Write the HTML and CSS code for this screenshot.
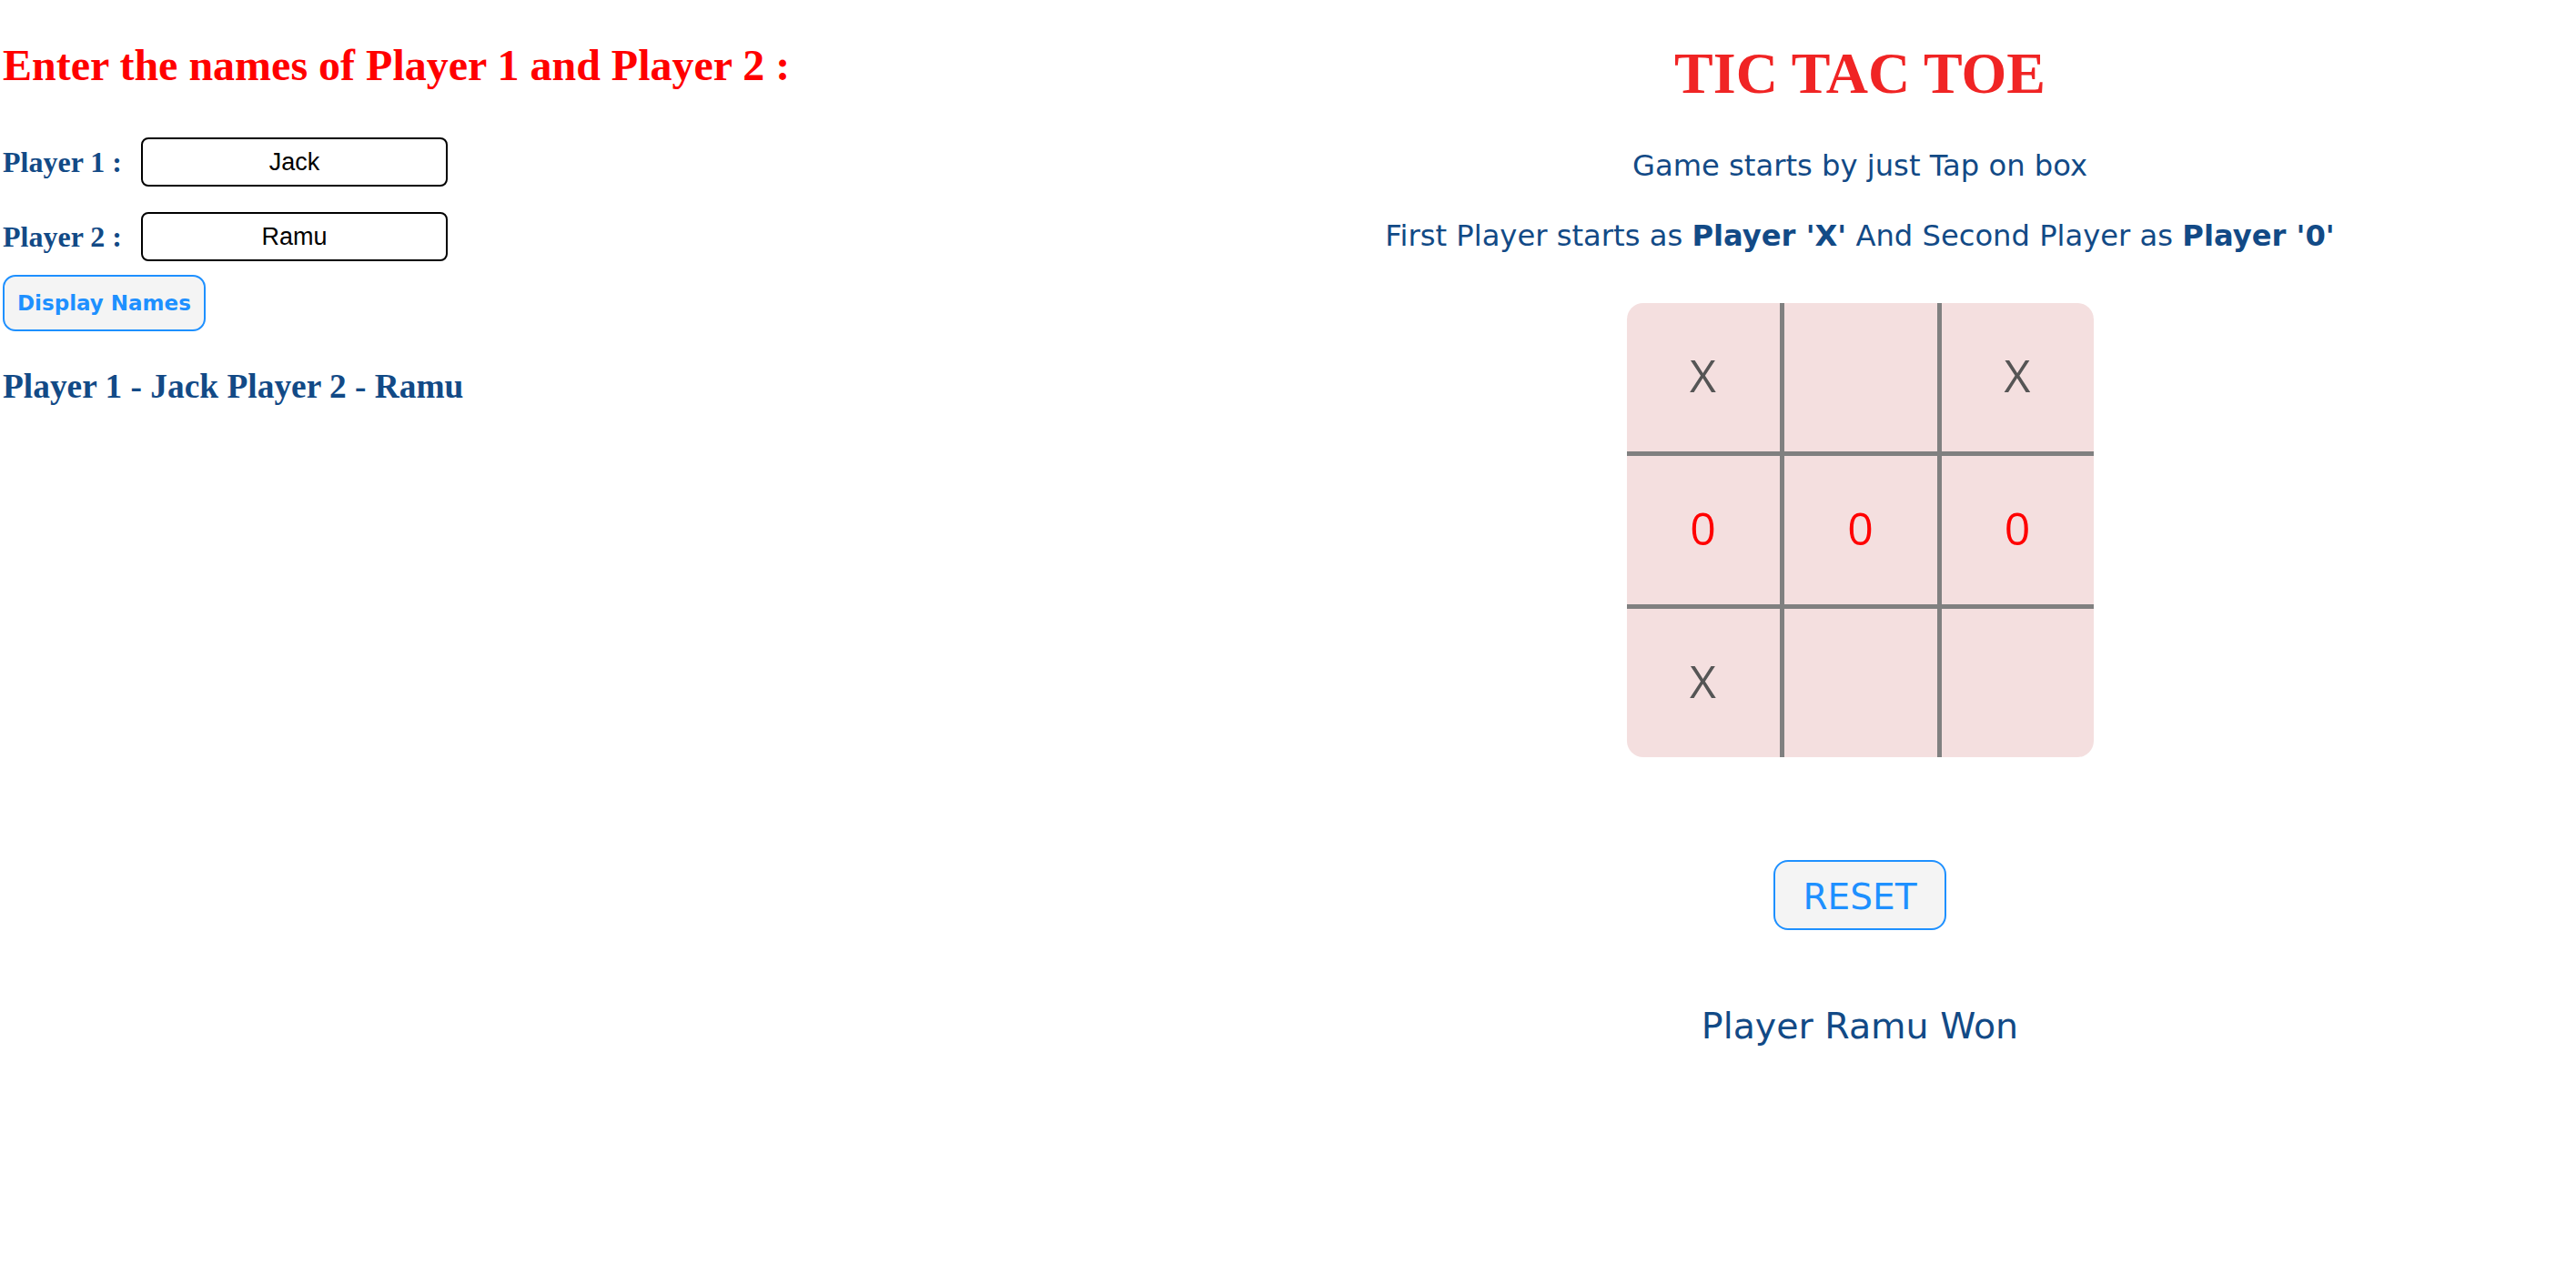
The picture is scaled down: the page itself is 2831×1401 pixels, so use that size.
FILE: index.html
```html
<!DOCTYPE html>
<html lang="en">
<head>
<meta charset="utf-8">
<title>Tic Tac Toe</title>
<link rel="stylesheet" href="styles.css">
</head>
<body>
<div class="page">
  <section class="players">
    <h1 class="prompt">Enter the names of Player 1 and Player 2 :</h1>
    <div class="field field-first">
      <label class="field-label" for="p1">Player 1 :</label>
      <input class="field-input" id="p1" type="text" value="Jack">
    </div>
    <div class="field">
      <label class="field-label" for="p2">Player 2 :</label>
      <input class="field-input" id="p2" type="text" value="Ramu">
    </div>
    <button class="display-btn" type="button">Display Names</button>
    <h2 class="names">Player 1 - Jack Player 2 - Ramu</h2>
  </section>

  <main class="game">
    <h1 class="title">TIC TAC TOE</h1>
    <p class="info info-first">Game starts by just Tap on box</p>
    <p class="info">First Player starts as <b>Player 'X'</b> And Second Player as <b>Player '0'</b></p>
    <div class="board">
      <div class="cell x">X</div>
      <div class="cell"></div>
      <div class="cell x">X</div>
      <div class="cell o">0</div>
      <div class="cell o">0</div>
      <div class="cell o">0</div>
      <div class="cell x">X</div>
      <div class="cell"></div>
      <div class="cell"></div>
    </div>
    <button class="reset" type="button">RESET</button>
    <p class="result">Player Ramu Won</p>
  </main>
</div>
</body>
</html>
```

FILE: styles.css
```css
html, body {
  margin: 0;
  padding: 0;
  background: #ffffff;
}

.page {
  display: grid;
  grid-template-columns: 1257px 1fr;
  width: 2831px;
}

/* ---------- left column ---------- */
.players {
  padding-left: 3px;
  display: flex;
  flex-direction: column;
  align-items: flex-start;
}

.prompt {
  margin: 46px 0 0;
  font: 700 48px/52px "Liberation Serif", "Times New Roman", serif;
  color: #ff0000;
  white-space: nowrap;
}

.field {
  display: flex;
  align-items: center;
  margin-top: 28px;
}

.field-first {
  margin-top: 53px;
}

.field-label {
  font: 700 32px/31px "Liberation Serif", "Times New Roman", serif;
  color: #124a86;
  width: 152px;
  white-space: nowrap;
}

.field-input {
  box-sizing: border-box;
  width: 337px;
  height: 54px;
  margin: 0;
  padding: 0 10px;
  border: 2px solid #000000;
  border-radius: 8px;
  font: 400 27px "Liberation Sans", Arial, sans-serif;
  color: #000000;
  text-align: center;
  background: #ffffff;
}

.display-btn {
  box-sizing: border-box;
  margin-top: 15px;
  height: 62px;
  padding: 0 14px;
  border: 2px solid #1e90ff;
  border-radius: 14px;
  background: #f4f4f4;
  color: #1e90ff;
  font: 700 23px "DejaVu Sans", Verdana, sans-serif;
  cursor: pointer;
}

.names {
  margin: 40px 0 0;
  font: 700 37.4px/41px "Liberation Serif", "Times New Roman", serif;
  color: #124a86;
  white-space: nowrap;
}

/* ---------- right column ---------- */
.game {
  display: flex;
  flex-direction: column;
  align-items: center;
  text-align: center;
}

.title {
  margin: 46px 0 0;
  font: 700 64px/70px "Liberation Serif", "Times New Roman", serif;
  color: #f02424;
}

.info {
  margin: 40px 0 0;
  font: 400 32.2px/37px "DejaVu Sans", Verdana, sans-serif;
  color: #124a86;
  white-space: nowrap;
}

.info-first {
  margin-top: 48px;
}

.info b {
  font-weight: 700;
}

.board {
  margin-top: 55px;
  display: grid;
  grid-template-columns: 173px 173px 167px;
  grid-template-rows: 168px 168px 163px;
  background: #f4dfdf;
  border-radius: 18px;
}

.cell {
  box-sizing: border-box;
  display: flex;
  align-items: center;
  justify-content: center;
  padding-bottom: 5px;
  font: 400 50px "Open Sans", "Noto Sans", sans-serif;
}

.cell:nth-child(3n+1),
.cell:nth-child(3n+2) {
  border-right: 5px solid #808080;
}

.cell:nth-child(-n+6) {
  border-bottom: 5px solid #808080;
}

.cell.x {
  color: #555555;
}

.cell.o {
  color: #ff0000;
}

.reset {
  box-sizing: border-box;
  margin-top: 113px;
  width: 190px;
  height: 77px;
  padding: 3px 0 0;
  border: 2px solid #1e90ff;
  border-radius: 16px;
  background: #f4f4f4;
  color: #1e90ff;
  font: 400 39px "DejaVu Sans", Verdana, sans-serif;
  cursor: pointer;
}

.result {
  margin: 83px 0 0;
  font: 400 39.5px/45px "DejaVu Sans", Verdana, sans-serif;
  color: #124a86;
  white-space: nowrap;
}
```
